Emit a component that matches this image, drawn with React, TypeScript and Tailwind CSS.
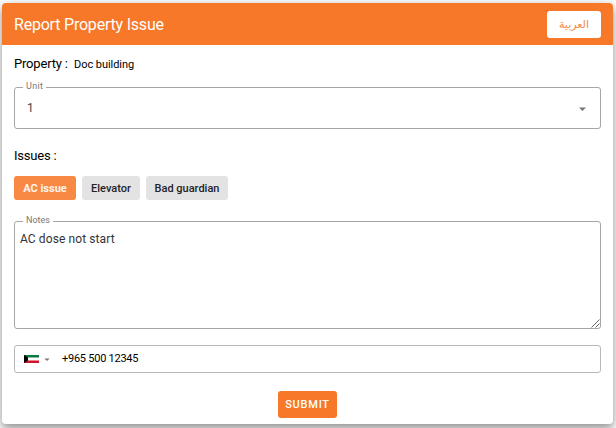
const issues = [
  { label: "AC issue", style: "w-[62px] bg-[#f88945] font-bold text-[#fff4ec]" },
  { label: "Elevator", style: "w-[58px] bg-[#e3e3e3] font-medium text-[#1f2328]" },
  { label: "Bad guardian", style: "w-[82px] bg-[#e3e3e3] font-medium text-[#1f2328]" },
];

function Caret({ className }: { className: string }) {
  return (
    <svg viewBox="0 0 7 4" className={className} aria-hidden="true">
      <path d="M0 0.5h7L3.5 4z" fill="currentColor" />
    </svg>
  );
}

function KuwaitFlag() {
  return (
    <svg viewBox="0 0 15 8" className="h-2 w-[15px]" preserveAspectRatio="none" aria-hidden="true">
      <path d="M0 0h15v8H0z" fill="#fff" />
      <path d="M0 0h15v2.6H0z" fill="#087a40" />
      <path d="M0 5.4h15V8H0z" fill="#d0122a" />
      <path d="M0 0l4 2.6v2.8L0 8z" fill="#000" />
    </svg>
  );
}

export default function App() {
  return (
    <div className="h-[428px] w-[616px] overflow-hidden bg-white pl-0.5 pt-[3px] font-['Roboto','Liberation_Sans',sans-serif]">
      <main className="flex h-[421px] w-[611px] flex-col overflow-hidden rounded bg-white shadow-[0_4px_6px_0_rgba(0,0,0,0.2),0_5px_12px_0_rgba(0,0,0,0.2),0_1px_18px_0_rgba(0,0,0,0.12)]">
        <header className="flex h-[42px] shrink-0 items-center justify-between bg-[#f67828] px-3">
          <h1 className="pt-px text-[16px] leading-5 tracking-[-0.21px] text-white">Report Property Issue</h1>
          <button
            lang="ar"
            dir="rtl"
            className="h-[27px] w-[54px] rounded-[3px] bg-white font-['Liberation_Sans','DejaVu_Sans',sans-serif] text-[11px] text-[#f58a4b]"
          >
            العربية
          </button>
        </header>

        <form className="flex flex-col px-3">
          <p className="mt-3 flex h-4 items-center text-black">
            <span className="w-[60px] pb-0.5 text-[13px] tracking-[-0.18px]">Property :</span>
            <span className="text-[11px] tracking-[-0.05px]">Doc building</span>
          </p>

          <fieldset className="mt-[9px] h-[47px] rounded-[3px] border border-[#a6a6a6] pl-2">
            <legend className="h-[11px] px-[3px] text-[9px] leading-[9px] text-[#777]">
              <span className="tracking-[0.3px]">Unit</span>
            </legend>
            <div className="flex h-[31px] items-center justify-between pl-1 pr-3.5 text-[12px] text-[#444]">
              <span className="pb-0.5">1</span>
              <Caret className="h-1 w-[7px] text-[#777]" />
            </div>
          </fieldset>

          <h2 className="mt-[19px] h-4 text-[13px] leading-4 tracking-[-0.2px] text-black">Issues :</h2>
          <div className="mt-3 flex gap-1.5">
            {issues.map((issue) => (
              <button
                type="button"
                key={issue.label}
                className={`h-6 whitespace-nowrap rounded-[3px] pt-0.5 text-[11px] ${issue.style}`}
              >
                {issue.label}
              </button>
            ))}
          </div>

          <fieldset className="mt-4 h-[113px] rounded-[3px] border border-[#a6a6a6] pl-2">
            <legend className="h-[11px] px-[3px] text-[9px] leading-[9px] text-[#777]">Notes</legend>
            <div className="-ml-[3px] -mt-px flex h-[102px] flex-col justify-between">
              <p className="pt-[5px] text-[12px] leading-4 tracking-[0.1px] text-[#333]">AC dose not start</p>
              <svg viewBox="0 0 9 9" className="size-[9px] self-end" aria-hidden="true">
                <path d="M0.5 8.5l8-8M4.5 8.5l4-4" stroke="#555" strokeWidth="0.9" />
              </svg>
            </div>
          </fieldset>

          <div className="mt-4 flex h-7 items-center rounded-[3px] border border-[#b8b8b8] pl-[9px]">
            <KuwaitFlag />
            <Caret className="ml-[5px] h-[3px] w-1.5 text-[#777]" />
            <span className="ml-3 text-[11px] tracking-[-0.25px] text-black">+965 500 12345</span>
          </div>

          <button
            type="button"
            className="mt-[18px] h-[27px] w-[59px] self-center rounded-[3px] bg-[#f67828] pt-px text-[11px] font-medium tracking-[0.75px] text-white"
          >
            SUBMIT
          </button>
        </form>
      </main>
    </div>
  );
}
